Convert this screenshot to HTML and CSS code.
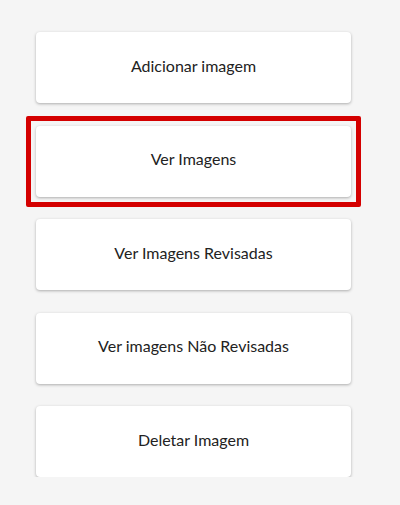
FILE: index.html
```html
<!DOCTYPE html>
<html lang="pt-BR">
<head>
    <meta charset="UTF-8">
    <meta name="viewport" content="width=device-width, initial-scale=1.0">
    <title>Imagens</title>
    <link rel="stylesheet" href="styles.css">
</head>
<body>
    <div class="menu">
        <button class="menu-btn">Adicionar imagem</button>
        <button class="menu-btn selected">Ver Imagens</button>
        <button class="menu-btn">Ver Imagens Revisadas</button>
        <button class="menu-btn">Ver imagens Não Revisadas</button>
        <button class="menu-btn">Deletar Imagem</button>
    </div>
</body>
</html>
```

FILE: styles.css
```css
body {
    margin: 0;
    padding: 0;
    background-color: #f5f5f5;
    font-family: Lato, "Open Sans", sans-serif;
    color: #222;
}

.menu {
    display: flex;
    flex-direction: column;
    gap: 22.5px;
    padding: 32px 0 0 36px;
}

.menu-btn {
    position: relative;
    width: 315px;
    height: 71px;
    padding: 0 0 5px;
    background: #fff;
    border: none;
    border-radius: 4px;
    box-shadow: 0 1px 3px rgba(0, 0, 0, 0.3);
    font-family: inherit;
    font-size: 16px;
    color: #222;
    cursor: pointer;
}

/* red frame around the active item */
.menu-btn.selected::after {
    content: "";
    position: absolute;
    top: -10px;
    left: -10px;
    right: -10px;
    bottom: -10px;
    border: 5px solid #d40000;
    border-radius: 2px;
}
```
